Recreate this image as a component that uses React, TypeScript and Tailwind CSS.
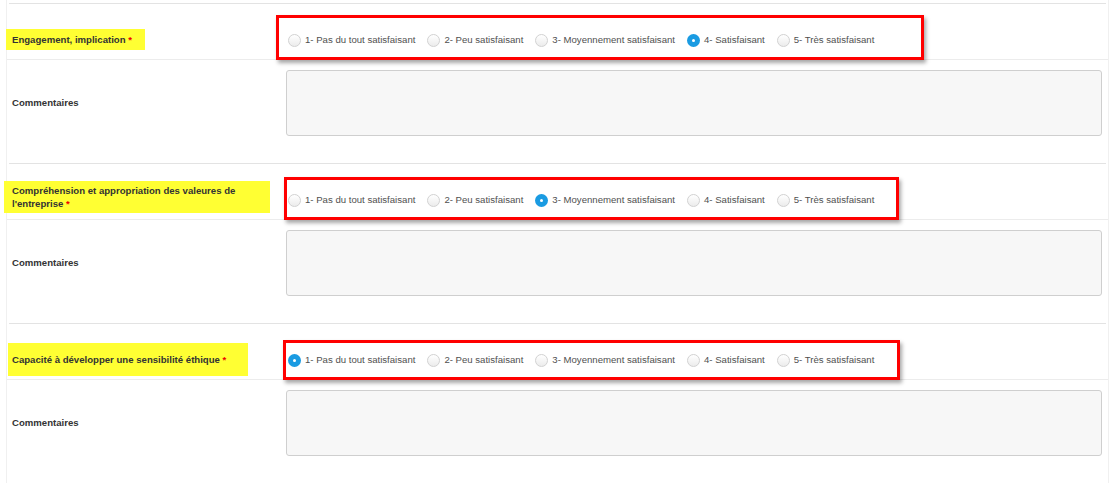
const options = [
  "1- Pas du tout satisfaisant",
  "2- Peu satisfaisant",
  "3- Moyennement satisfaisant",
  "4- Satisfaisant",
  "5- Très satisfaisant",
];

const sections = [
  {
    label: "Engagement, implication",
    checked: 3,
    mark: "-ml-[6px] pl-[6px] pr-[13px] py-[4px]",
    box: "-left-[10px] -top-[5px] w-[648px] h-[45px]",
  },
  {
    label: "Compréhension et appropriation des valeures de l'entreprise",
    checked: 2,
    mark: "-ml-[8px] mb-[6px] w-[266px] pl-[8px] pr-[20px] py-[3px]",
    box: "-left-[2px] -top-[3px] w-[615px] h-[43px]",
  },
  {
    label: "Capacité à développer une sensibilité éthique",
    checked: 0,
    mark: "-ml-[4px] pl-[4px] pr-[22px] py-[10px]",
    box: "-left-[3px] top-0 w-[617px] h-[40px]",
  },
];

function Radio({ on }: { on: boolean }) {
  if (on) {
    return (
      <span className="flex h-[13px] w-[13px] shrink-0 items-center justify-center rounded-full bg-[#1a9be2]">
        <span className="h-[3px] w-[3px] rounded-full bg-white" />
      </span>
    );
  }
  return (
    <span className="h-[13px] w-[13px] shrink-0 rounded-full border border-[#d2d2d2] bg-gradient-to-b from-white to-[#ececec]" />
  );
}

function Section({ s }: { s: (typeof sections)[number] }) {
  return (
    <div>
      <div className="mx-[2px] border-t border-[#e3e3e3]" />
      <div className="flex h-[56px] border-b border-[#ececec] pt-[16px]">
        <div className="flex w-[279px] shrink-0 items-center pl-[5px]">
          <span className={`inline-block bg-[#ffff33] font-bold leading-[13px] text-[#333] ${s.mark}`}>
            {s.label} <span className="text-[#e00]">*</span>
          </span>
        </div>
        <div className="relative flex flex-1 items-center pl-[2px]">
          <div className="flex items-center pt-[2px]">
            {options.map((o, i) => (
              <label key={o} className="mr-[12px] flex items-center gap-[4px] text-[#505050]">
                <Radio on={i === s.checked} />
                <span>{o}</span>
              </label>
            ))}
          </div>
          <div
            className={`pointer-events-none absolute border-[3px] border-[#ff0000] shadow-[2px_3px_4px_rgba(0,0,0,0.35)] ${s.box}`}
          />
        </div>
      </div>
      <div className="flex items-center pt-[10px] pb-[27px]">
        <div className="w-[279px] shrink-0 pl-[5px] font-bold text-[#333]">Commentaires</div>
        <div className="h-[66px] flex-1 mr-[6px] rounded-[3px] border border-[#cfcfcf] bg-[#f7f7f7]" />
      </div>
    </div>
  );
}

export default function App() {
  return (
    <div className="h-[483px] overflow-hidden bg-white font-['Liberation_Sans',Arial,sans-serif] text-[9.6px]">
      <div className="ml-[6px] w-[1103px] min-h-full border-x border-[#f0f0f0] pt-[3px]">
        {sections.map((s) => (
          <Section key={s.label} s={s} />
        ))}
      </div>
    </div>
  );
}
